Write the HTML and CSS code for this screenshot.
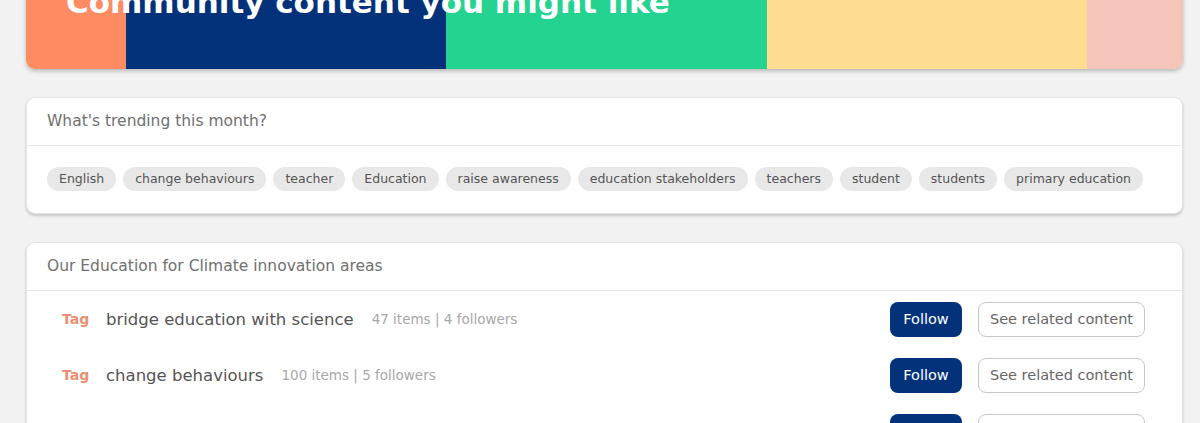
FILE: index.html
```html
<!DOCTYPE html>
<html lang="en">
<head>
<meta charset="UTF-8" />
<title>Community content</title>
<link rel="stylesheet" href="styles.css">
</head>
<body>
<main class="page">

  <!-- banner -->
  <section class="hero">
    <div class="stripes">
      <span class="s-orange"></span>
      <span class="s-navy"></span>
      <span class="s-green"></span>
      <span class="s-yellow"></span>
      <span class="s-pink"></span>
    </div>
    <h1>Community content you might like</h1>
  </section>

  <!-- trending tags -->
  <section class="card">
    <div class="card-head">What's trending this month?</div>
    <div class="pills">
      <span class="pill">English</span>
      <span class="pill">change behaviours</span>
      <span class="pill">teacher</span>
      <span class="pill">Education</span>
      <span class="pill">raise awareness</span>
      <span class="pill">education stakeholders</span>
      <span class="pill">teachers</span>
      <span class="pill">student</span>
      <span class="pill">students</span>
      <span class="pill">primary education</span>
    </div>
  </section>

  <!-- innovation areas -->
  <section class="card">
    <div class="card-head">Our Education for Climate innovation areas</div>
    <ul class="areas">
      <li>
        <span class="kind">Tag</span>
        <span class="name">bridge education with science</span>
        <span class="meta">47 items | 4 followers</span>
        <button class="btn-follow">Follow</button>
        <button class="btn-related">See related content</button>
      </li>
      <li>
        <span class="kind">Tag</span>
        <span class="name">change behaviours</span>
        <span class="meta">100 items | 5 followers</span>
        <button class="btn-follow">Follow</button>
        <button class="btn-related">See related content</button>
      </li>
      <li>
        <span class="kind">Tag</span>
        <span class="name">raise awareness</span>
        <span class="meta">88 items | 3 followers</span>
        <button class="btn-follow">Follow</button>
        <button class="btn-related">See related content</button>
      </li>
    </ul>
  </section>

</main>
</body>
</html>
```

FILE: styles.css
```css
body {
  margin: 0;
  background: #f2f2f2;
  font-family: "DejaVu Sans", sans-serif;
  color: #555;
  overflow: hidden;
}
.page {
  padding: 0 17px 0 26px;
  display: flex;
  flex-direction: column;
  gap: 28px;
}

/* banner */
.hero {
  position: relative;
  height: 169px;
  margin-top: -100px;
  border-radius: 0 0 9px 9px;
  overflow: hidden;
  box-shadow: 0 2px 4px rgba(0,0,0,0.25);
}
.stripes {
  display: flex;
  height: 100%;
}
.stripes span { display: block; height: 100%; }
.s-orange { width: 100px; background: #fe8c63; }
.s-navy { width: 320px; background: #03327b; }
.s-green { width: 321px; background: #24d38f; }
.s-yellow { width: 320px; background: #fedc91; }
.s-pink { flex: 1; background: #f5c5b9; }
.hero h1 {
  position: absolute;
  left: 40px;
  top: 82px;
  margin: 0;
  color: #fff;
  font-size: 31px;
  font-weight: bold;
  line-height: 40px;
}

/* cards */
.card {
  background: #fff;
  border-radius: 9px;
  border: 1px solid #e4e4e4;
  box-shadow: 0 2px 3px rgba(0,0,0,0.18);
}
.card-head {
  height: 47px;
  line-height: 46px;
  padding: 0 20px;
  border-bottom: 1px solid #e6e6e6;
  font-size: 15.5px;
  color: #707070;
}

.pills {
  display: flex;
  flex-wrap: wrap;
  gap: 7px;
  padding: 21px 20px 22px;
}
.pill {
  background: #e8e8e8;
  border-radius: 12px;
  height: 24px;
  line-height: 24px;
  padding: 0 12px;
  font-size: 12.5px;
  color: #555;
}

/* innovation rows */
.areas {
  list-style: none;
  margin: 0;
  padding: 0 37px 0 35px;
}
.areas li {
  display: flex;
  align-items: center;
  height: 56px;
}
.kind {
  color: #e8906f;
  font-weight: bold;
  font-size: 14px;
  width: 44px;
}
.name {
  font-size: 16.5px;
  color: #555;
  margin-right: 18px;
}
.meta {
  font-size: 13.5px;
  color: #a8a8a8;
  flex: 1;
}
.areas button {
  height: 35px;
  font-family: inherit;
  font-size: 14.5px;
  border-radius: 8px;
  cursor: pointer;
}
.btn-follow {
  background: #03327b;
  color: #fff;
  border: none;
  width: 72px;
  margin-right: 16px;
}
.btn-related {
  background: #fff;
  color: #666;
  border: 1px solid #c8c8c8;
  width: 167px;
}
```
